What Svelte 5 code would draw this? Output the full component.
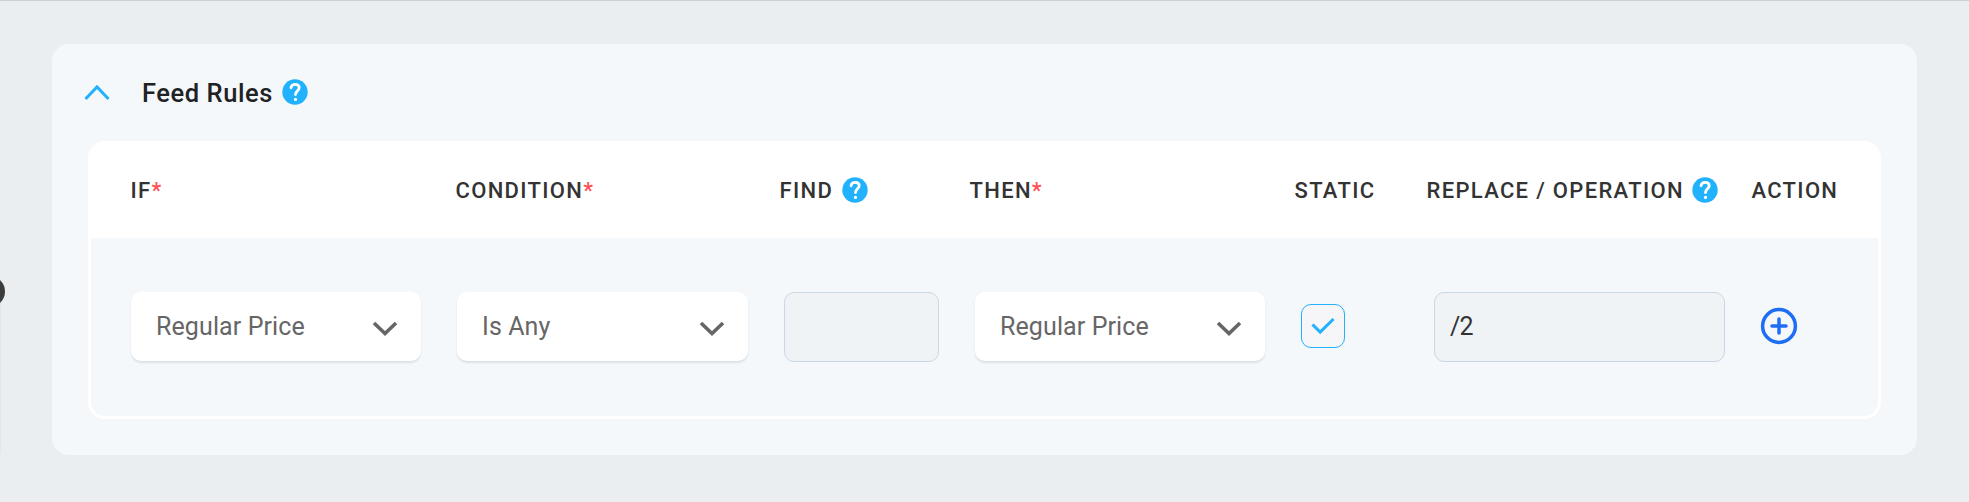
<script lang="ts">
	interface Column {
		label: string;
		required?: boolean;
		help?: boolean;
	}

	const columns: Column[] = [
		{ label: 'IF', required: true },
		{ label: 'CONDITION', required: true },
		{ label: 'FIND', help: true },
		{ label: 'THEN', required: true },
		{ label: 'STATIC' },
		{ label: 'REPLACE / OPERATION', help: true },
		{ label: 'ACTION' }
	];

	let isStatic = $state(true);
	let open = $state(true);
	let replace = $state('/2');
</script>

{#snippet helpIcon()}
	<svg class="help" viewBox="0 0 26 26" aria-hidden="true">
		<circle cx="13" cy="13" r="12.7" fill="#22b1fd" />
		<path
			d="M9 8.8C9.3 6.5 11 5.3 13.2 5.3c2.4 0 4 1.4 4 3.5 0 2.9-3.7 3.3-3.7 6.7"
			fill="none"
			stroke="#fff"
			stroke-width="2.8"
			stroke-linecap="round"
		/>
		<circle cx="13.5" cy="20.4" r="1.6" fill="#fff" />
	</svg>
{/snippet}

{#snippet select(value: string)}
	<button class="select">
		<span>{value}</span>
		<svg width="26" height="18" viewBox="0 0 26 18" fill="none" aria-hidden="true">
			<path d="M2 3L13 13.5L24 3" stroke="#666" stroke-width="3.6" />
		</svg>
	</button>
{/snippet}

<div class="page">
	<span class="rail"></span>
	<span class="handle"></span>

	<section class="card">
		<header class="card-header">
			<button class="toggle" aria-label="Toggle" onclick={() => (open = !open)}>
				<svg width="26" height="17" viewBox="0 0 26 17" fill="none" aria-hidden="true">
					<path d="M1.5 15L13 3L24.5 15" stroke="#22b1fd" stroke-width="3" />
				</svg>
			</button>
			<h2>Feed Rules</h2>
			{@render helpIcon()}
		</header>

		{#if open}
			<div class="table">
				<div class="head">
					{#each columns as col}
						<div class="th">
							<span>{col.label}</span>{#if col.required}<span class="star">*</span>{/if}
							{#if col.help}{@render helpIcon()}{/if}
						</div>
					{/each}
				</div>
				<div class="row">
					{@render select('Regular Price')}
					{@render select('Is Any')}
					<input type="text" aria-label="Find" />
					{@render select('Regular Price')}
					<button class="check" aria-label="Static" onclick={() => (isStatic = !isStatic)}>
						{#if isStatic}
							<svg width="24" height="18" viewBox="0 0 24 18" fill="none" aria-hidden="true">
								<path d="M1.5 7.5L9.2 15L22.5 2" stroke="#22b1fd" stroke-width="3.1" />
							</svg>
						{/if}
					</button>
					<input type="text" aria-label="Replace" bind:value={replace} />
					<button class="add" aria-label="Add">
						<svg width="38" height="38" viewBox="0 0 38 38" fill="none" aria-hidden="true">
							<circle cx="19" cy="19" r="16.4" stroke="#1f6df5" stroke-width="3.5" />
							<path
								d="M19 12v14M12 19h14"
								stroke="#1f6df5"
								stroke-width="3.5"
								stroke-linecap="round"
							/>
						</svg>
					</button>
				</div>
			</div>
		{/if}
	</section>
</div>

<style>
	:global(body) {
		background: #eaeef1;
	}

	.page {
		position: relative;
		box-sizing: border-box;
		height: 502px;
		padding: 43px 52px 0;
		border-top: 1px solid #cdd1d5;
		overflow: hidden;
		font-family: Roboto, sans-serif;
	}

	.rail {
		position: absolute;
		left: 0;
		top: 300px;
		width: 1px;
		height: 153px;
		background: #e3e7ea;
	}

	.handle {
		position: absolute;
		left: -26px;
		top: 275px;
		width: 31px;
		height: 31px;
		border-radius: 50%;
		background: #3c3c3c;
	}

	button {
		padding: 0;
		border: 0;
		background: none;
		font: inherit;
	}

	svg {
		display: block;
		flex: none;
	}

	.help {
		width: 26px;
		height: 26px;
	}

	.card {
		box-sizing: border-box;
		height: 410.5px;
		padding: 0 36px;
		border-radius: 17px;
		background: #f4f8fb;
	}

	.card-header {
		display: flex;
		align-items: center;
		height: 97px;
	}

	.card-header .help {
		margin-top: -2px;
	}

	.toggle {
		margin-left: -4px;
	}

	h2 {
		margin: 1px 9px 0 32px;
		font-size: 25.5px;
		font-weight: 500;
		letter-spacing: 0.55px;
		color: #202223;
	}

	.table {
		box-sizing: border-box;
		height: 278px;
		border: 3px solid #fff;
		border-radius: 17px;
		overflow: hidden;
	}

	.head {
		display: grid;
		grid-template-columns: 325px 324px 190px 325px 132px 325px 1fr;
		align-items: center;
		box-sizing: border-box;
		height: 94px;
		padding: 0 0 2px 39.5px;
		background: #fff;
	}

	.th {
		display: flex;
		align-items: center;
		font-size: 22px;
		font-weight: 500;
		letter-spacing: 1.32px;
		white-space: nowrap;
		color: #333;
	}

	.star {
		color: #ff4d4f;
	}

	.th .help {
		margin-left: 8.5px;
	}

	.row {
		display: grid;
		grid-template-columns: 290px 291px 155px 290px 97px 291px 38px;
		column-gap: 36px;
		align-items: center;
		height: 177px;
		padding-left: 40px;
	}

	.select {
		display: flex;
		align-items: center;
		justify-content: space-between;
		height: 69px;
		padding: 0 23px 0 25px;
		border-radius: 10px;
		background: #fff;
		box-shadow: 0 2px 2px #dce1e6;
		font-size: 25px;
		letter-spacing: 0.1px;
		color: #666;
	}

	.select span {
		margin-top: -1px;
	}

	.select svg {
		margin-top: 4px;
	}

	input {
		box-sizing: border-box;
		width: 100%;
		height: 70px;
		padding: 0 15px;
		border: 1px solid #cbd7e6;
		border-radius: 10px;
		outline: 0;
		background: #eff3f6;
		font: 25px Roboto, sans-serif;
		letter-spacing: -0.8px;
		color: #333;
	}

	.check {
		display: grid;
		place-items: center;
		box-sizing: border-box;
		width: 44px;
		height: 44px;
		margin-bottom: 1px;
		border: 1px solid #22b1fd;
		border-radius: 10px;
		background: #f6f6f9;
	}

	.add {
		margin: 0 0 1px -1px;
	}
</style>
